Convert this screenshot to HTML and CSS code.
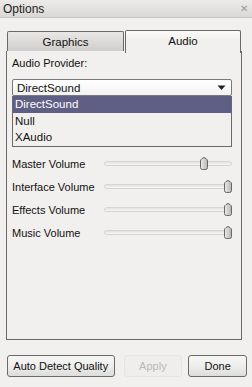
FILE: index.html
```html
<!DOCTYPE html>
<html lang="en">

<head>
     <meta charset="UTF-8">
     <title>Options</title>
     <link rel="stylesheet" href="styles.css">
</head>

<body>
     <div id="window">
          <div class="titlebar">
               <span class="title">Options</span>
               <span class="close">&#x2715;</span>
          </div>

          <div class="tabs">
               <div class="tab">Graphics</div>
               <div class="tab active">Audio</div>
          </div>

          <div class="panel">
               <div class="label">Audio Provider:</div>
               <div class="select">
                    <span>DirectSound</span>
                    <svg class="arrow" width="9" height="6" viewBox="0 0 9 6">
                         <path d="M0.5 0.5 L8.5 0.5 L4.5 5 Z" fill="#222" />
                    </svg>
               </div>
               <ul class="options">
                    <li class="selected">DirectSound</li>
                    <li>Null</li>
                    <li>XAudio</li>
               </ul>

               <div class="sliders">
                    <div class="row">
                         <span>Master Volume</span>
                         <div class="track"><div class="thumb" style="left: 76%"><svg width="8" height="13" viewBox="0 0 8 13"><path d="M0.5 4 Q0.5 2.5 2 1.5 L4 0.5 L6 1.5 Q7.5 2.5 7.5 4 V10.5 Q7.5 12.5 5.5 12.5 H2.5 Q0.5 12.5 0.5 10.5 Z" fill="url(#g)" stroke="#666" /></svg></div></div>
                    </div>
                    <div class="row">
                         <span>Interface Volume</span>
                         <div class="track"><div class="thumb" style="left: 95%"><svg width="8" height="13" viewBox="0 0 8 13"><path d="M0.5 4 Q0.5 2.5 2 1.5 L4 0.5 L6 1.5 Q7.5 2.5 7.5 4 V10.5 Q7.5 12.5 5.5 12.5 H2.5 Q0.5 12.5 0.5 10.5 Z" fill="url(#g)" stroke="#666" /></svg></div></div>
                    </div>
                    <div class="row">
                         <span>Effects Volume</span>
                         <div class="track"><div class="thumb" style="left: 95%"><svg width="8" height="13" viewBox="0 0 8 13"><path d="M0.5 4 Q0.5 2.5 2 1.5 L4 0.5 L6 1.5 Q7.5 2.5 7.5 4 V10.5 Q7.5 12.5 5.5 12.5 H2.5 Q0.5 12.5 0.5 10.5 Z" fill="url(#g)" stroke="#666" /></svg></div></div>
                    </div>
                    <div class="row">
                         <span>Music Volume</span>
                         <div class="track"><div class="thumb" style="left: 95%"><svg width="8" height="13" viewBox="0 0 8 13"><path d="M0.5 4 Q0.5 2.5 2 1.5 L4 0.5 L6 1.5 Q7.5 2.5 7.5 4 V10.5 Q7.5 12.5 5.5 12.5 H2.5 Q0.5 12.5 0.5 10.5 Z" fill="url(#g)" stroke="#666" /></svg></div></div>
                    </div>
               </div>
          </div>

          <div class="buttons">
               <button class="btn auto">Auto Detect Quality</button>
               <button class="btn apply" disabled>Apply</button>
               <button class="btn done">Done</button>
          </div>
     </div>

     <!-- shared gradient for slider thumbs -->
     <svg class="defs" width="0" height="0">
          <defs>
               <linearGradient id="g" x1="0" y1="0" x2="1" y2="0">
                    <stop offset="0" stop-color="#ececec" />
                    <stop offset="1" stop-color="#b4b4b4" />
               </linearGradient>
          </defs>
     </svg>
</body>

</html>
```

FILE: styles.css
```css
* {
     padding: 0;
     margin: 0;
     box-sizing: border-box;
     font-family: 'Liberation Sans', Arial, sans-serif;
}

html,
body {
     width: 252px;
     height: 387px;
     overflow: hidden;
     background: #f1f0ee;
}

#window {
     width: 252px;
     height: 387px;
     display: flex;
     flex-direction: column;
     color: #111;
     font-size: 11px;
}

.titlebar {
     height: 18px;
     display: flex;
     align-items: center;
     justify-content: space-between;
     padding: 0 4px 0 3px;
     background: linear-gradient(to bottom, #ecebe9, #d9d8d6);
     border-bottom: 1px solid #c6c5c3;
}

.title {
     font-size: 12px;
     color: #222;
}

.close {
     font-size: 10px;
     color: #9a9a9a;
}

.tabs {
     display: flex;
     align-items: flex-end;
     margin: 11px 0 0 7px;
     height: 22px;
}

.tab {
     width: 117px;
     height: 20px;
     display: flex;
     align-items: center;
     justify-content: center;
     font-size: 11.5px;
     border: 1px solid #6a6a6a;
     border-bottom: none;
     border-radius: 2px 2px 0 0;
     background: linear-gradient(to bottom, #e9e8e6, #cfcecc);
}

.tab.active {
     width: 116px;
     height: 23px;
     margin-left: 1px;
     margin-bottom: -2px;
     padding-bottom: 2px;
     background: linear-gradient(to bottom, #fbfbfa, #f1f0ee 40%);
     border-color: #6a6a6a;
     border-bottom: none;
     position: relative;
     z-index: 1;
}

.panel {
     margin: 0 10px 0 6px;
     height: 289px;
     border: 1px solid #6a6a6a;
     border-top: none;
     padding: 5px 9px 0 5px;
}

.label {
     height: 14px;
     line-height: 14px;
}

.select {
     margin-top: 9px;
     height: 17px;
     display: flex;
     align-items: center;
     justify-content: space-between;
     padding: 0 5px 0 4px;
     border: 1px solid #7a7a7a;
     border-radius: 2px;
     background: linear-gradient(to bottom, #ffffff, #f2f2f2);
     font-size: 11.5px;
}

.options {
     list-style: none;
     border: 1px solid #6a6a6a;
     border-top: none;
     background: #f1f0ee;
     font-size: 11.5px;
}

.options li {
     height: 16.5px;
     line-height: 16px;
     padding-left: 2px;
}

.options li.selected {
     background: #5f5e85;
     color: #fff;
}

.sliders {
     margin-top: 10px;
     display: flex;
     flex-direction: column;
     gap: 9px;
}

.row {
     height: 14px;
     display: flex;
     align-items: center;
     justify-content: space-between;
}

.track {
     width: 128px;
     height: 5px;
     border-radius: 3px;
     border: 1px solid #d4d4d4;
     background: linear-gradient(to bottom, #e2e2e2, #f6f6f6);
     position: relative;
}

.thumb {
     position: absolute;
     top: -5px;
     width: 8px;
     height: 13px;
     margin-left: -1px;
}

.thumb svg {
     display: block;
}

.defs {
     position: absolute;
}

.buttons {
     display: flex;
     align-items: center;
     padding: 15px 5px 0 7px;
}

.btn {
     height: 22px;
     font-size: 11px;
     border: 1px solid #6a6a6a;
     border-radius: 3px;
     background: linear-gradient(to bottom, #f6f6f5 0%, #eeeeec 50%, #dcdcda 100%);
     color: #111;
}

.auto {
     width: 108px;
}

.apply {
     width: 59px;
     margin-left: 9px;
     border-color: #e6e5e3;
     background: #efeeec;
     color: #b8b8b8;
}

.done {
     width: 59px;
     margin-left: 6px;
}
```
